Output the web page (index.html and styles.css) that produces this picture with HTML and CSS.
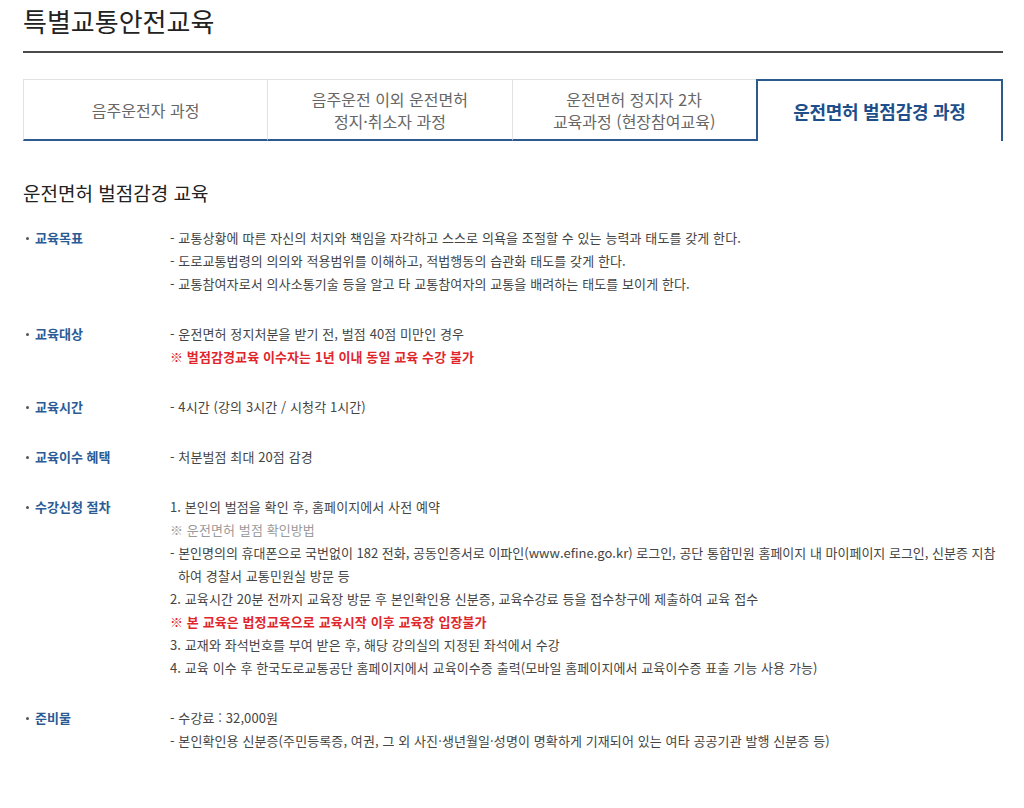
FILE: index.html
```html
<!DOCTYPE html>
<html lang="ko">
<head>
<meta charset="utf-8">
<link rel="stylesheet" href="styles.css">
</head>
<body>
<div class="page">
  <h1 class="title">특별교통안전교육</h1>
  <ul class="tabs">
    <li class="tab">음주운전자 과정</li>
    <li class="tab">음주운전 이외 운전면허<br>정지·취소자 과정</li>
    <li class="tab">운전면허 정지자 2차<br>교육과정 (현장참여교육)</li>
    <li class="tab active">운전면허 벌점감경 과정</li>
  </ul>
  <h2 class="sub">운전면허 벌점감경 교육</h2>
  <dl class="info">
    <div class="row">
      <dt>교육목표</dt>
      <dd>
        <p>- 교통상황에 따른 자신의 처지와 책임을 자각하고 스스로 의욕을 조절할 수 있는 능력과 태도를 갖게 한다.</p>
        <p>- 도로교통법령의 의의와 적용범위를 이해하고, 적법행동의 습관화 태도를 갖게 한다.</p>
        <p>- 교통참여자로서 의사소통기술 등을 알고 타 교통참여자의 교통을 배려하는 태도를 보이게 한다.</p>
      </dd>
    </div>
    <div class="row">
      <dt>교육대상</dt>
      <dd>
        <p>- 운전면허 정지처분을 받기 전, 벌점 40점 미만인 경우</p>
        <p class="red">※ 벌점감경교육 이수자는 1년 이내 동일 교육 수강 불가</p>
      </dd>
    </div>
    <div class="row">
      <dt>교육시간</dt>
      <dd><p>- 4시간 (강의 3시간 / 시청각 1시간)</p></dd>
    </div>
    <div class="row">
      <dt>교육이수 혜택</dt>
      <dd><p>- 처분벌점 최대 20점 감경</p></dd>
    </div>
    <div class="row">
      <dt>수강신청 절차</dt>
      <dd>
        <p>1. 본인의 벌점을 확인 후, 홈페이지에서 사전 예약</p>
        <p class="gray">※ 운전면허 벌점 확인방법</p>
        <p class="hang"><span class="nw">- 본인명의의 휴대폰으로 국번없이 182 전화, 공동인증서로 이파인(www.efine.go.kr) 로그인, 공단 통합민원 홈페이지 내 마이페이지 로그인, 신분증 지참</span><br>하여 경찰서 교통민원실 방문 등</p>
        <p>2. 교육시간 20분 전까지 교육장 방문 후 본인확인용 신분증, 교육수강료 등을 접수창구에 제출하여 교육 접수</p>
        <p class="red">※ 본 교육은 법정교육으로 교육시작 이후 교육장 입장불가</p>
        <p>3. 교재와 좌석번호를 부여 받은 후, 해당 강의실의 지정된 좌석에서 수강</p>
        <p>4. 교육 이수 후 한국도로교통공단 홈페이지에서 교육이수증 출력(모바일 홈페이지에서 교육이수증 표출 기능 사용 가능)</p>
      </dd>
    </div>
    <div class="row">
      <dt>준비물</dt>
      <dd>
        <p>- 수강료 : 32,000원</p>
        <p>- 본인확인용 신분증(주민등록증, 여권, 그 외 사진·생년월일·성명이 명확하게 기재되어 있는 여타 공공기관 발행 신분증 등)</p>
      </dd>
    </div>
  </dl>
</div>
</body>
</html>
```

FILE: styles.css
```css
* { box-sizing: border-box; }
html, body { margin: 0; padding: 0; background: #fff; }
body {
  font-family: "Noto Sans CJK KR", "Noto Sans", sans-serif;
  color: #444;
}
.page {
  width: 980px;
  margin-left: 23px;
}
.title {
  margin: 0;
  padding-top: 3px;
  height: 53px;
  font-size: 26px;
  font-weight: 400;
  line-height: 36px;
  color: #222;
  border-bottom: 2px solid #4a4a4a;
}
.tabs {
  list-style: none;
  margin: 26px 0 0;
  padding: 0;
  display: flex;
  height: 62px;
}
.tab {
  flex: 1;
  display: flex;
  align-items: center;
  justify-content: center;
  text-align: center;
  font-size: 16px;
  line-height: 22px;
  color: #666;
  border-top: 1px solid #e2e2e2;
  border-left: 1px solid #e2e2e2;
  border-bottom: 2px solid #2c5a8e;
}
.tab.active {
  border: 2px solid #2c5a8e;
  border-bottom: 0;
  color: #1f4f8a;
  font-weight: 700;
  font-size: 18px;
  letter-spacing: -0.3px;
}
.sub {
  margin: 38px 0 0;
  font-size: 19px;
  font-weight: 400;
  line-height: 28px;
  color: #222;
}
.info {
  margin: 19px 0 0;
  padding: 0;
}
.row {
  display: flex;
  margin-bottom: 27px;
}
.row dt {
  width: 147px;
  flex: none;
  padding-left: 12px;
  position: relative;
  font-size: 13px;
  line-height: 23px;
  font-weight: 700;
  color: #2a5b95;
}
.row dt::before {
  content: "";
  position: absolute;
  left: 3px;
  top: 11px;
  width: 3px;
  height: 3px;
  border-radius: 50%;
  background: #555;
}
.row dd {
  margin: 0;
  flex: 1;
}
.row dd p {
  margin: 0;
  font-size: 13px;
  line-height: 23px;
  color: #444;
  letter-spacing: 0.1px;
}
.row dd p.red { color: #e0262b; font-weight: 700; }
.row dd p.gray { color: #9a9a9a; }
.row dd p.hang { padding-left: 8px; text-indent: -8px; }
.row dd p.hang .nw { white-space: nowrap; letter-spacing: 0; }
```
